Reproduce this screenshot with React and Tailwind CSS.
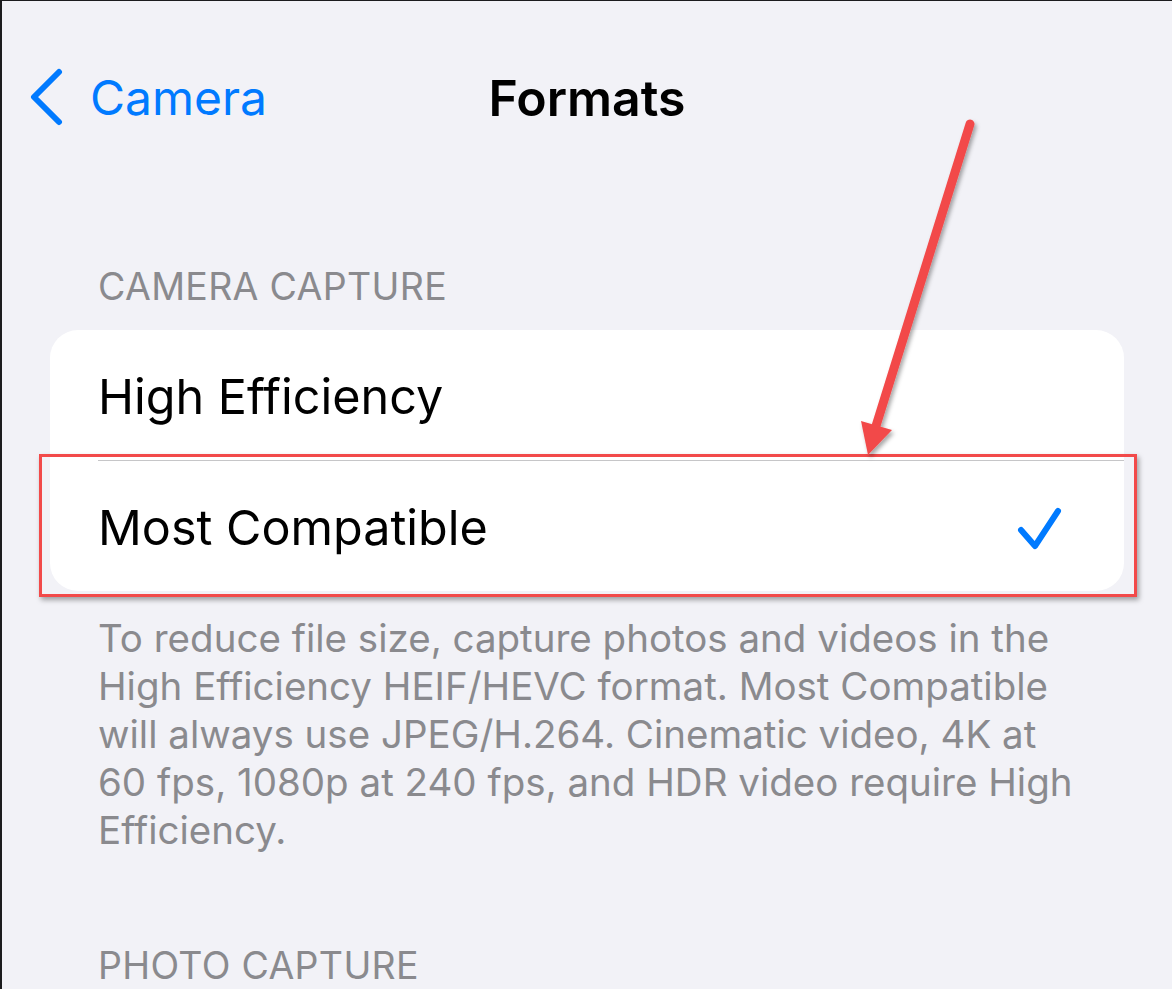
import React from "react";

const Chevron = () => (
  <svg width="40" height="60" viewBox="0 0 40 60" className="shrink-0">
    <path
      d="M31 4 L6 29 L31 54"
      fill="none"
      stroke="#007aff"
      strokeWidth="6"
      strokeLinecap="round"
      strokeLinejoin="round"
    />
  </svg>
);

const Check = () => (
  <svg width="50" height="50" viewBox="0 0 50 50" className="mt-[6px]">
    <path
      d="M5 23 L19 39 L42 4"
      fill="none"
      stroke="#007aff"
      strokeWidth="6"
      strokeLinecap="round"
      strokeLinejoin="round"
    />
  </svg>
);

const footerLines = [
  "To reduce file size, capture photos and videos in the",
  "High Efficiency HEIF/HEVC format. Most Compatible",
  "will always use JPEG/H.264. Cinematic video, 4K at",
  "60 fps, 1080p at 240 fps, and HDR video require High",
  "Efficiency.",
];

export default function App() {
  return (
    <div
      className="relative w-[1172px] h-[989px] overflow-hidden bg-[#f2f2f7] border-l-2 border-t border-[#1c1c1e]"
      style={{ fontFamily: "Inter, 'Noto Sans', sans-serif" }}
    >
      {/* nav bar */}
      <div className="grid grid-cols-[1fr_auto_1fr] items-center h-[194px]">
        <div className="flex items-center pl-[26px] gap-[22px] text-[#007aff] text-[48px] leading-none">
          <Chevron />
          <span>Camera</span>
        </div>
        <div className="text-[50px] font-semibold leading-none text-black">Formats</div>
        <div />
      </div>

      {/* camera capture */}
      <div className="pl-[96px] pt-[73px] text-[37.5px] leading-none text-[#8a8a8e] tracking-[0.3px]">
        CAMERA CAPTURE
      </div>

      <div className="mt-[24px] ml-[48px] mr-[48px] bg-white rounded-[28px] overflow-hidden">
        <div className="h-[130px] flex items-center pt-[6px] pl-[48px] text-[48.5px] leading-none text-black">
          High Efficiency
        </div>
        <div className="ml-[48px] h-px bg-[#c6c6c8]" />
        <div className="h-[130px] flex items-center justify-between pt-[6px] pl-[48px] pr-[58px] text-[48.5px] leading-none text-black">
          <span>Most Compatible</span>
          <Check />
        </div>
      </div>

      <div className="pl-[96px] pt-[23px] text-[38.5px] leading-[48px] text-[#8a8a8e]">
        {footerLines.map((l) => (
          <div key={l}>{l}</div>
        ))}
      </div>

      <div className="pl-[96px] pt-[93px] text-[37.5px] leading-none text-[#8a8a8e] tracking-[0.3px]">
        PHOTO CAPTURE
      </div>

      {/* annotation overlay */}
      <div className="absolute left-[37px] top-[453px] w-[1098px] h-[143px] border-[3px] border-[#f24a4a] shadow-[2px_3px_5px_rgba(0,0,0,0.35)]" />
      <svg
        className="absolute left-0 top-0 pointer-events-none"
        width="1172"
        height="989"
        viewBox="0 0 1172 989"
      >
        <defs>
          <filter id="sh" x="-20%" y="-20%" width="140%" height="140%">
            <feDropShadow dx="2" dy="3" stdDeviation="2" floodColor="#000" floodOpacity="0.35" />
          </filter>
        </defs>
        <g filter="url(#sh)">
          <line x1="968" y1="123" x2="874" y2="425" stroke="#f24a4a" strokeWidth="9" strokeLinecap="round" />
          <polygon points="866,454 859,420 890,429" fill="#f24a4a" />
        </g>
      </svg>
    </div>
  );
}
